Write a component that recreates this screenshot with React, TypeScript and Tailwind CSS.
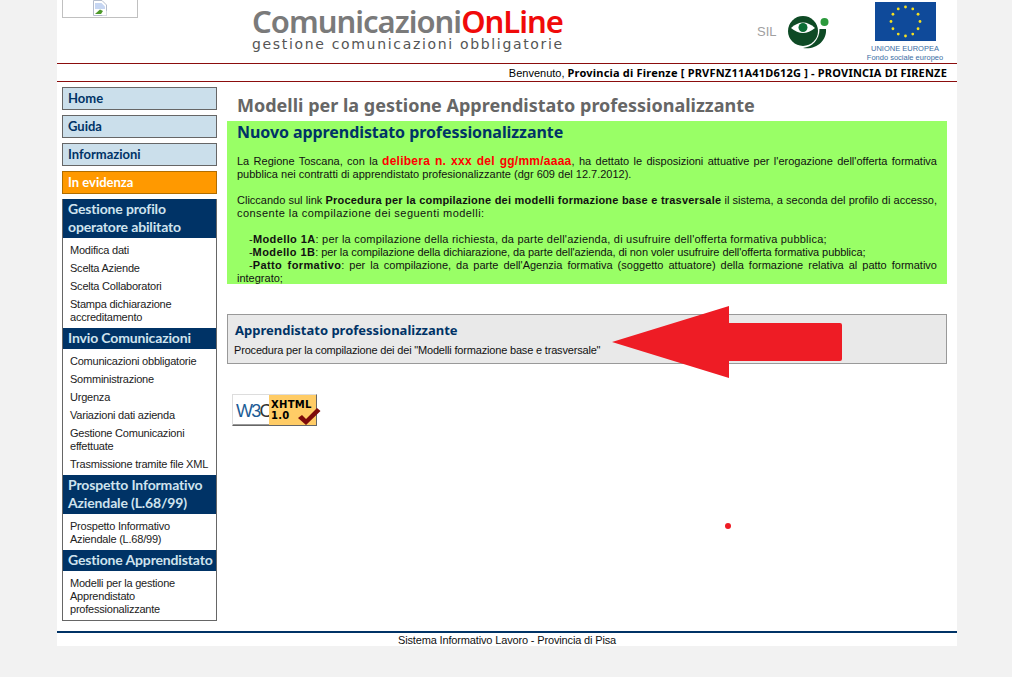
const body = "font-['Liberation_Sans','Noto_Sans',sans-serif]"
const head = "font-['Noto_Sans','DejaVu_Sans',sans-serif]"
const menu = "font-['Lato','Noto_Sans',sans-serif]"

const buttons = [
  { label: 'Home' },
  { label: 'Guida' },
  { label: 'Informazioni' },
]

const groups = [
  {
    title: ['Gestione profilo', 'operatore abilitato'],
    items: [['Modifica dati'], ['Scelta Aziende'], ['Scelta Collaboratori'], ['Stampa dichiarazione', 'accreditamento']],
  },
  {
    title: ['Invio Comunicazioni'],
    items: [
      ['Comunicazioni obbligatorie'],
      ['Somministrazione'],
      ['Urgenza'],
      ['Variazioni dati azienda'],
      ['Gestione Comunicazioni', 'effettuate'],
      ['Trasmissione tramite file XML'],
    ],
  },
  {
    title: ['Prospetto Informativo', 'Aziendale (L.68/99)'],
    items: [['Prospetto Informativo', 'Aziendale (L.68/99)']],
  },
  {
    title: ['Gestione Apprendistato'],
    items: [['Modelli per la gestione', 'Apprendistato', 'professionalizzante']],
  },
]

function BrokenImage() {
  return (
    <svg width="16" height="16" viewBox="0 0 16 16">
      <path d="M1.5 0.5H10L14.5 5V15.5H1.5Z" fill="#fff" stroke="#b4bccb" />
      <path d="M3 3H9.5L13 6.5V9H3Z" fill="#c6d6f2" />
      <path d="M3 14L8 9.5L11 11L9 14Z" fill="#4e9a2b" />
      <path d="M10 15.5L14.5 10.5V15.5Z" fill="#fff" />
    </svg>
  )
}

function SilLogo() {
  return (
    <svg width="42" height="36" viewBox="0 0 42 36">
      <circle cx="15" cy="17" r="15" fill="#0e4a25" />
      <path d="M3 14Q15 3 27 14Q15 24 3 14Z" fill="#fff" />
      <circle cx="15" cy="13.5" r="4.5" fill="#0b6e35" />
      <path d="M31.5 15H38C39 27 28 36 15 34C24 33 31.5 26 31.5 15Z" fill="#0e4a25" />
      <circle cx="36.5" cy="8" r="4" fill="#2c9a3c" />
    </svg>
  )
}

function EuFlag() {
  const stars = Array.from({ length: 12 }, (_, i) => {
    const a = (i * Math.PI) / 6
    return { x: 30.5 + 14.5 * Math.sin(a), y: 19.5 - 14.5 * Math.cos(a) }
  })
  return (
    <svg width="61" height="39" viewBox="0 0 61 39">
      <rect width="61" height="39" fill="#0f4a9a" />
      {stars.map((s, i) => (
        <circle key={i} cx={s.x} cy={s.y} r="1.4" fill="#f5e020" />
      ))}
    </svg>
  )
}

function W3cBadge() {
  return (
    <div className="mt-[30px] ml-[5px] flex h-[32px] w-[85px] border border-t-[#ddd] border-l-[#ddd] border-r-[#666] border-b-[#666] bg-white shadow-[inset_-1px_-1px_0_#999]">
      <div className="w-[36px] whitespace-nowrap pl-[3px] pt-[6px] font-['Liberation_Sans',sans-serif] text-[18px] leading-[20px] tracking-[-1.8px] text-[#1d5c96]">
        W3<span className="text-[#333]">C</span>
      </div>
      <div className="relative flex-1 bg-[#fc6] pl-[2px] pt-[4px] font-['DejaVu_Sans',sans-serif] text-[10px] font-bold leading-[11px] tracking-[0.3px] text-black">
        <div>XHTML</div>
        <div>1.0</div>
        <svg className="absolute -right-[5px] bottom-[-1px]" width="24" height="20" viewBox="0 0 24 20">
          <path d="M1 12L5 9L9 13L20 2L23.5 5L9 19Z" fill="#7d0a0a" />
        </svg>
      </div>
    </div>
  )
}

export default function App() {
  return (
    <div className={`relative min-h-[677px] bg-[#f2f2f2] text-[11px] leading-[13px] text-[#111] ${body}`}>
      <div className="relative ml-[57px] w-[900px] bg-white">
        {/* testata */}
        <div className="flex h-[63px] items-start">
          <div className="ml-[5px] flex h-[18px] w-[76px] items-start justify-center border-x border-b border-[#c0c0c0]">
            <BrokenImage />
          </div>
          <div className="ml-[114px] mt-[5px] w-[320px]">
            <div className={`h-[31px] whitespace-nowrap text-[31px] font-semibold leading-[33px] tracking-[-1px] text-[#7a7a7a] ${head}`}>
              Comunicazioni<span className="text-[#f00a0a]">OnLine</span>
            </div>
            <div className="mt-[1px] whitespace-nowrap font-['DejaVu_Sans',sans-serif] text-[14px] leading-[15px] tracking-[1.67px] text-[#555]">
              gestione comunicazioni obbligatorie
            </div>
          </div>
          <div className="ml-[185px] mt-[25px] w-[31px] text-[13px] leading-[14px] text-[#a0a0a0]">SIL</div>
          <div className="mt-[14px]">
            <SilLogo />
          </div>
          <div className="ml-[30px] mt-[2px] flex w-[90px] flex-col items-center">
            <EuFlag />
            <div className="mt-[3px] whitespace-nowrap text-[7.5px] leading-[9px] text-[#3a6ea5]">UNIONE EUROPEA</div>
            <div className="whitespace-nowrap text-[7.5px] leading-[10px] text-[#3a6ea5]">Fondo sociale europeo</div>
          </div>
        </div>

        {/* benvenuto */}
        <div className="h-[19px] border-y border-[#8b0d0d] pr-[10px] pt-[2px] text-right text-[11px] leading-[14px] text-black">
          Benvenuto, <b className={`tracking-[0.2px] ${head}`}>Provincia di Firenze [ PRVFNZ11A41D612G ] - PROVINCIA DI FIRENZE</b>
        </div>

        <div className="flex h-[549px]">
          {/* menu laterale */}
          <div className="ml-[5px] mt-[5px] w-[155px]">
            {buttons.map((b) => (
              <div key={b.label} className={`mb-[5px] h-[23px] border border-[#666] bg-[#cbdfeb] pl-[5px] pt-[1px] text-[13px] font-bold leading-[19px] text-[#003366] ${menu}`}>
                {b.label}
              </div>
            ))}
            <div className={`mb-[5px] h-[23px] border border-[#b06d00] bg-[#ff9900] pl-[5px] pt-[1px] text-[13px] font-bold leading-[19px] text-white ${menu}`}>
              In evidenza
            </div>
            <div className="border border-t-0 border-[#666] bg-white">
              {groups.map((g) => (
                <div key={g.title[0]}>
                  <div className={`bg-[#003366] px-[5px] pb-[2px] pt-[1px] text-[14px] font-bold leading-[18px] tracking-[-0.15px] text-[#cfe3ee] ${menu}`}>
                    {g.title.map((t) => (
                      <div key={t} className="whitespace-nowrap">{t}</div>
                    ))}
                  </div>
                  <div className="px-[7px] pt-[5px]">
                    {g.items.map((item) => (
                      <div key={item[0]} className="mb-[4px] whitespace-nowrap pt-[1px] tracking-[-0.22px] text-[#222]">
                        {item.map((l) => (
                          <div key={l}>{l}</div>
                        ))}
                      </div>
                    ))}
                  </div>
                </div>
              ))}
            </div>
          </div>

          {/* contenuto */}
          <div className="ml-[10px] w-[720px]">
            <h1 className={`ml-[10px] mt-[12px] h-[27px] text-[18px] font-bold leading-[22px] text-[#666] ${head}`}>
              Modelli per la gestione Apprendistato professionalizzante
            </h1>
            <div className="h-[163px] overflow-hidden bg-[#99ff66] px-[10px]">
              <h2 className={`h-[34px] pt-[1px] text-[16px] font-bold leading-[20px] tracking-[-0.07px] text-[#003366] ${head}`}>
                Nuovo apprendistato professionalizzante
              </h2>
              <p className="text-justify">
                La Regione Toscana, con la <b className="text-[12px] tracking-[0.25px] text-[#f00]">delibera n. xxx del gg/mm/aaaa</b>, ha dettato le disposizioni attuative per l'erogazione dell'offerta formativa pubblica nei contratti di apprendistato profesionalizzante (dgr 609 del 12.7.2012).
              </p>
              <p className="mt-[13px] text-justify">
                Cliccando sul link <b className="tracking-[0.2px]">Procedura per la compilazione dei modelli formazione base e trasversale</b> il sistema, a seconda del profilo di accesso, <span className="tracking-[0.45px]">consente la compilazione dei seguenti modelli:</span>
              </p>
              <p className="mt-[13px] text-justify">
                <span className="block pl-[12px] tracking-[0.22px]">-<b className="tracking-[0.4px]">Modello 1A</b>: per la compilazione della richiesta, da parte dell'azienda, di usufruire dell'offerta formativa pubblica;</span>
                <span className="block pl-[12px] tracking-[-0.08px]">-<b className="tracking-[0.4px]">Modello 1B</b>: per la compilazione della dichiarazione, da parte dell'azienda, di non voler usufruire dell'offerta formativa pubblica;</span>
                <span className="block indent-[12px]">-<b className="tracking-[0.4px]">Patto formativo</b>: per la compilazione, da parte dell'Agenzia formativa (soggetto attuatore) della formazione relativa al patto formativo integrato;</span>
              </p>
            </div>
            <div className="mt-[30px] h-[50px] border border-[#999] bg-[#e9e9e9] pl-[7px] pt-[7px]">
              <div className={`text-[13px] font-bold leading-[16px] text-[#003366] ${head}`}>Apprendistato professionalizzante</div>
              <div className="mt-[6px] ml-[-1px] leading-[13px] tracking-[-0.18px]">Procedura per la compilazione dei dei "Modelli formazione base e trasversale"</div>
            </div>
            <W3cBadge />
          </div>
        </div>

        {/* piede */}
        <div className="h-[15px] border-t-2 border-[#003366] text-center leading-[14px] tracking-[-0.15px] text-[#111]">
          Sistema Informativo Lavoro - Provincia di Pisa
        </div>
      </div>

      {/* freccia rossa disegnata sopra la pagina */}
      <svg className="absolute left-[610px] top-[304px]" width="234" height="76" viewBox="0 0 234 76">
        <path d="M2 38L119 2V19H230Q232 19 232 21V55Q232 57 230 57H119V74Z" fill="#ee1c25" />
      </svg>
      <div className="absolute left-[725px] top-[523px] h-[6px] w-[6px] rounded-full bg-[#ee1c25]" />
    </div>
  )
}
